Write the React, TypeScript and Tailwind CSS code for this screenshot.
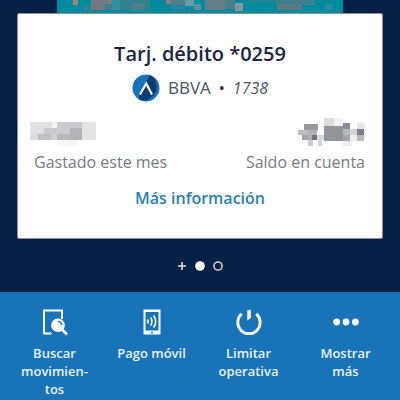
import React from "react";

type Tile = [x: number, y: number, w: number, h: number, fill: string];

const cardTiles: Tile[] = [
  [16, 0, 5, 5, "#a58581"],
  [27, 6, 9, 5, "#2f8290"],
  [34, 0, 14, 10, "#6f797f"],
  [48, 0, 7, 4, "#7a7a80"],
  [48, 4, 7, 6, "#38828f"],
  [55, 0, 8, 10, "#3090a2"],
  [63, 0, 30, 10, "#31818e"],
  [76, 3, 12, 6, "#507d87"],
  [109, 0, 5, 4, "#917c7c"],
  [114, 0, 14, 5, "#4c808b"],
  [114, 6, 14, 4, "#3083a0"],
  [128, 0, 9, 6, "#6d98a6"],
  [137, 4, 7, 6, "#5b93a1"],
  [148, 0, 20, 10, "#657d84"],
  [168, 0, 10, 9, "#47818c"],
  [178, 3, 8, 8, "#87979d"],
  [186, 0, 34, 3, "#1c8697"],
  [220, 0, 26, 4, "#407f8a"],
  [220, 4, 25, 6, "#577b83"],
  [246, 0, 12, 5, "#398390"],
  [268, 4, 8, 6, "#258da0"],
];

const spentTiles: Tile[] = [
  [0, 0, 66, 18, "#dddddf"],
  [0, 0, 22, 12, "#e1e1e2"],
  [22, 0, 5, 6, "#f4f4f4"],
  [27, 0, 25, 12, "#cbcbcd"],
  [8, 12, 13, 6, "#c0c0c3"],
  [14, 6, 13, 6, "#cacacc"],
  [21, 12, 6, 6, "#d0d0d2"],
  [27, 12, 14, 6, "#b8b8bb"],
  [40, 6, 12, 12, "#b4b4b7"],
  [52, 0, 14, 18, "#e4e4e5"],
  [27, 18, 20, 6, "#f7f7f7"],
];

const balanceTiles: Tile[] = [
  [6, 6, 14, 6, "#98989e"],
  [0, 12, 10, 5, "#bdbdc1"],
  [10, 12, 9, 10, "#b1b1b6"],
  [4, 17, 6, 5, "#a3a3a9"],
  [14, 17, 5, 5, "#70737d"],
  [10, 22, 5, 6, "#cbcbcf"],
  [19, 17, 7, 5, "#d8d8db"],
  [20, 22, 4, 7, "#d4d4d6"],
  [26, 0, 10, 8, "#dededf"],
  [36, 0, 9, 8, "#f2f2f3"],
  [26, 8, 19, 15, "#94959b"],
  [45, 5, 7, 6, "#8b8c93"],
  [45, 11, 7, 6, "#b8b8bd"],
  [45, 17, 9, 6, "#a5a6ab"],
  [45, 23, 9, 5, "#eeeeef"],
  [52, 11, 7, 6, "#d3d3d5"],
  [59, 5, 7, 6, "#e6e6e8"],
  [59, 11, 7, 6, "#7e8088"],
  [59, 17, 7, 6, "#b7b7bc"],
  [52, 17, 7, 6, "#ededee"],
  [66, 6, 5, 16, "#f4f4f5"],
];

function Tiles({ tiles, className, label }: { tiles: Tile[]; className: string; label: string }) {
  return (
    <svg className={className} role="img" aria-label={label} shapeRendering="crispEdges">
      {tiles.map(([x, y, w, h, fill], i) => (
        <rect key={i} x={x} y={y} width={w} height={h} fill={fill} />
      ))}
    </svg>
  );
}

function BankLogo() {
  return (
    <svg className="size-7 shrink-0" viewBox="0 0 28 28" aria-hidden="true">
      <circle cx="14" cy="14" r="13.5" fill="#1973b8" />
      <path d="M18 1.1 A13.5 13.5 0 0 1 7 25.6 L7 21 L14 8Z" fill="#0b3c70" />
      <path d="M8 20.5 L14.2 9.5 L20 20.5" fill="none" stroke="#fff" strokeWidth="2.2" />
    </svg>
  );
}

function SearchIcon() {
  return (
    <svg className="size-7" viewBox="0 0 28 28" aria-hidden="true">
      <path d="M10.5 25.5H3V2.5H21V11" fill="none" stroke="#fff" strokeWidth="2" />
      <path d="M20.5 21L26 26.5" stroke="#fff" strokeWidth="2.6" />
      <circle cx="17" cy="17.3" r="6.8" fill="#fff" />
      <path d="M17 13.6A4 4 0 0 1 20.7 17.3" fill="none" stroke="#1973b8" strokeWidth="1.5" />
    </svg>
  );
}

function PhoneIcon() {
  return (
    <svg className="size-7" viewBox="0 0 28 28" aria-hidden="true">
      <path fillRule="evenodd" d="M5.5 1.5H22.5V26.5H5.5ZM7.5 4V22.5H20.5V4ZM14 23.4a1.1 1.1 0 1 0 .01 0Z" fill="#fff" />
      <path d="M9.6 11.5Q10.9 13.5 9.6 15.5M12.6 9.5Q15.3 13.5 12.6 17.5M15.6 7.5Q19.8 13.5 15.6 19.5" fill="none" stroke="#fff" strokeWidth="1.6" />
    </svg>
  );
}

function PowerIcon() {
  return (
    <svg className="size-7" viewBox="0 0 28 28" aria-hidden="true">
      <path d="M6.8 5.9A11.2 11.2 0 1 0 21.2 5.9" fill="none" stroke="#fff" strokeWidth="2.8" />
      <path d="M12.3 2.5L15.8 1.5V10L12.3 12.5Z" fill="#fff" />
    </svg>
  );
}

function MoreIcon() {
  return (
    <svg className="size-7" viewBox="0 0 28 28" fill="#fff" aria-hidden="true">
      <circle cx="4.6" cy="14" r="3.4" />
      <circle cx="14" cy="14" r="3.4" />
      <circle cx="23.4" cy="14" r="3.4" />
    </svg>
  );
}

const actions = [
  { lines: ["Buscar", "movimien-", "tos"], icon: <SearchIcon /> },
  { lines: ["Pago móvil"], icon: <PhoneIcon /> },
  { lines: ["Limitar", "operativa"], icon: <PowerIcon /> },
  { lines: ["Mostrar", "más"], icon: <MoreIcon /> },
];

export default function App() {
  return (
    <div className="flex min-h-screen flex-col bg-[#072146] font-['Open_Sans',sans-serif]">
      <main>
        <div className="mx-[57px] h-[13px] bg-[#028a9e]">
          <Tiles tiles={cardTiles} className="block h-3 w-full" label="Tarjeta" />
        </div>
        <section className="mx-[17px] flex flex-col items-center rounded-xs border border-[#8b8d91] bg-white pt-7 pb-7">
          <h1 className="text-xl leading-6 font-semibold text-[#1a2440]">Tarj. débito *0259</h1>
          <div className="mt-2 flex items-center gap-2 text-base text-[#4a5262]">
            <BankLogo />
            <span className="text-[17px]">BBVA</span>
            <span className="text-[#1a2440]">•</span>
            <em>1738</em>
          </div>
          <dl className="mt-4 flex w-full justify-between pr-4 pl-3 text-[#777b84]">
            <div className="flex flex-col-reverse">
              <dt className="px-1 pt-1 text-base leading-6">Gastado este mes</dt>
              <dd className="pt-1"><Tiles tiles={spentTiles} className="block h-6 w-20" label="Importe oculto" /></dd>
            </div>
            <div className="flex flex-col-reverse items-end">
              <dt className="px-px pt-1 text-base leading-6">Saldo en cuenta</dt>
              <dd><Tiles tiles={balanceTiles} className="block h-7 w-[68px]" label="Saldo oculto" /></dd>
            </div>
          </dl>
          <a href="#informacion" className="mt-3 text-base leading-6 font-semibold text-[#2a7fba]">Más información</a>
        </section>
        <nav className="flex h-[53px] items-center justify-center gap-2" aria-label="Tarjetas">
          <button aria-label="Añadir"><svg className="block size-2.5" viewBox="0 0 10 10"><path d="M1 5H9M5 1V9" stroke="#e5e2dc" strokeWidth="1.6" /></svg></button>
          <button aria-label="Tarjeta 1"><svg className="block size-2.5" viewBox="0 0 10 10"><circle cx="5" cy="5" r="4.8" fill="#fff" /></svg></button>
          <button aria-label="Tarjeta 2"><svg className="block size-2.5" viewBox="0 0 10 10"><circle cx="5" cy="5" r="4.1" fill="none" stroke="#d6d3cd" strokeWidth="1.5" /></svg></button>
        </nav>
      </main>
      <footer className="grid flex-1 grid-cols-4 items-start bg-[#1973b8] px-1.5 pt-4">
        {actions.map((a) => (
          <button key={a.lines[0]} className="flex flex-col items-center gap-2 text-[13px] leading-[18px] font-semibold text-[#e8f4fc]">
            {a.icon}
            <span>{a.lines.map((l) => <span key={l} className="block whitespace-nowrap">{l}</span>)}</span>
          </button>
        ))}
      </footer>
    </div>
  );
}
